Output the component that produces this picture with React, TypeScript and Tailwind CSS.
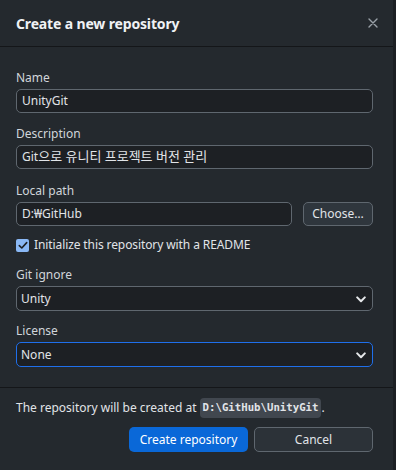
import React from "react";

const font = { fontFamily: '"Noto Sans", "Noto Sans CJK KR", sans-serif' };

function Chevron() {
  return (
    <svg width="10" height="7" viewBox="0 0 10 7" className="absolute right-[6px] top-[9px]">
      <path d="M1.2 1.4 L5 5.2 L8.8 1.4" fill="none" stroke="#e6e8ea" strokeWidth="2" strokeLinecap="round" strokeLinejoin="round" />
    </svg>
  );
}

function Label({ children }: { children: React.ReactNode }) {
  return <div className="text-[12px] leading-[16px] text-[#d1d5da] mb-[3px]">{children}</div>;
}

function Input({ children }: { children: React.ReactNode }) {
  return (
    <div className="h-[24px] flex items-center rounded-[5px] border border-[#5f676f] bg-[#1d2024] px-[5px] text-[12px] text-[#e1e4e8]">
      {children}
    </div>
  );
}

function Select({ value, focused }: { value: string; focused?: boolean }) {
  return (
    <div
      className={
        focused
          ? "relative h-[25px] flex items-center rounded-[5px] border border-[#1f6feb] bg-[#1d2024] px-[4px] text-[12px] text-[#e1e4e8]"
          : "relative h-[25px] flex items-center rounded-[5px] border border-[#5f676f] bg-[#1d2024] px-[4px] text-[12px] text-[#e1e4e8]"
      }
    >
      {value}
      <Chevron />
    </div>
  );
}

export default function App() {
  return (
    <div className="w-[396px] h-[470px] flex bg-[#1c1f23]" style={font}>
      <div className="w-[393px] h-[470px] bg-[#24292e] flex flex-col">
        <div className="h-[47px] flex items-center justify-between pl-4 pr-[15px] border-b border-[#141619]">
          <div className="text-[14px] font-bold text-[#f0f2f4] tracking-[-0.15px]">Create a new repository</div>
          <svg width="10" height="10" viewBox="0 0 10 10">
            <path d="M1 1 L9 9 M9 1 L1 9" stroke="#9aa1a8" strokeWidth="1.4" strokeLinecap="round" />
          </svg>
        </div>
        <div className="pl-4 pr-[20px] pt-[23px] pb-[20px] flex flex-col border-b border-[#141619]">
          <Label>Name</Label>
          <Input>UnityGit</Input>
          <div className="h-[13px]" />
          <Label>Description</Label>
          <Input>
            <span>Git</span>
            <span className="text-[13px]">으로 유니티 프로젝트 버전 관리</span>
          </Input>
          <div className="h-[14px]" />
          <Label>Local path</Label>
          <div className="flex gap-[11px]">
            <div className="flex-1">
              <Input>D:₩GitHub</Input>
            </div>
            <div className="w-[70px] h-[24px] flex items-center justify-center rounded-[5px] border border-[#5f676f] bg-[#2f363d] text-[12px] text-[#e1e4e8]">
              Choose…
            </div>
          </div>
          <div className="h-[11px]" />
          <div className="flex items-center h-[16px] gap-[5px]">
            <div className="w-[13px] h-[13px] rounded-[2px] bg-[#8ab8f5] flex items-center justify-center">
              <svg width="10" height="9" viewBox="0 0 10 9">
                <path d="M1.3 4.6 L3.8 7 L8.7 1.6" fill="none" stroke="#1d2024" strokeWidth="1.6" strokeLinecap="round" strokeLinejoin="round" />
              </svg>
            </div>
            <div className="text-[12px] text-[#e1e4e8] tracking-[-0.1px]">Initialize this repository with a README</div>
          </div>
          <div className="h-[14px]" />
          <Label>Git ignore</Label>
          <Select value="Unity" />
          <div className="h-[12px]" />
          <Label>License</Label>
          <Select value="None" focused />
        </div>
        <div className="pl-4 pr-[20px] pt-[10px] flex flex-col">
          <div className="flex items-center text-[12px] text-[#e1e4e8] h-[20px]">
            <span>The repository will be created at&nbsp;</span>
            <span
              className="bg-[#41474f] rounded-[4px] px-[3px] h-[20px] flex items-center text-[10.7px] font-bold text-[#e1e4e8]"
              style={{ fontFamily: '"DejaVu Sans Mono", monospace' }}
            >
              D:\GitHub\UnityGit
            </span>
            <span>.</span>
          </div>
          <div className="flex justify-end gap-[6px] mt-[9px]">
            <div className="w-[119px] h-[25px] rounded-[5px] bg-[#0a68d8] flex items-center justify-center text-[12px] text-white">
              Create repository
            </div>
            <div className="w-[119px] h-[25px] rounded-[5px] border border-[#5f676f] bg-[#2c3238] flex items-center justify-center text-[12px] text-[#e1e4e8]">
              Cancel
            </div>
          </div>
        </div>
      </div>
    </div>
  );
}
